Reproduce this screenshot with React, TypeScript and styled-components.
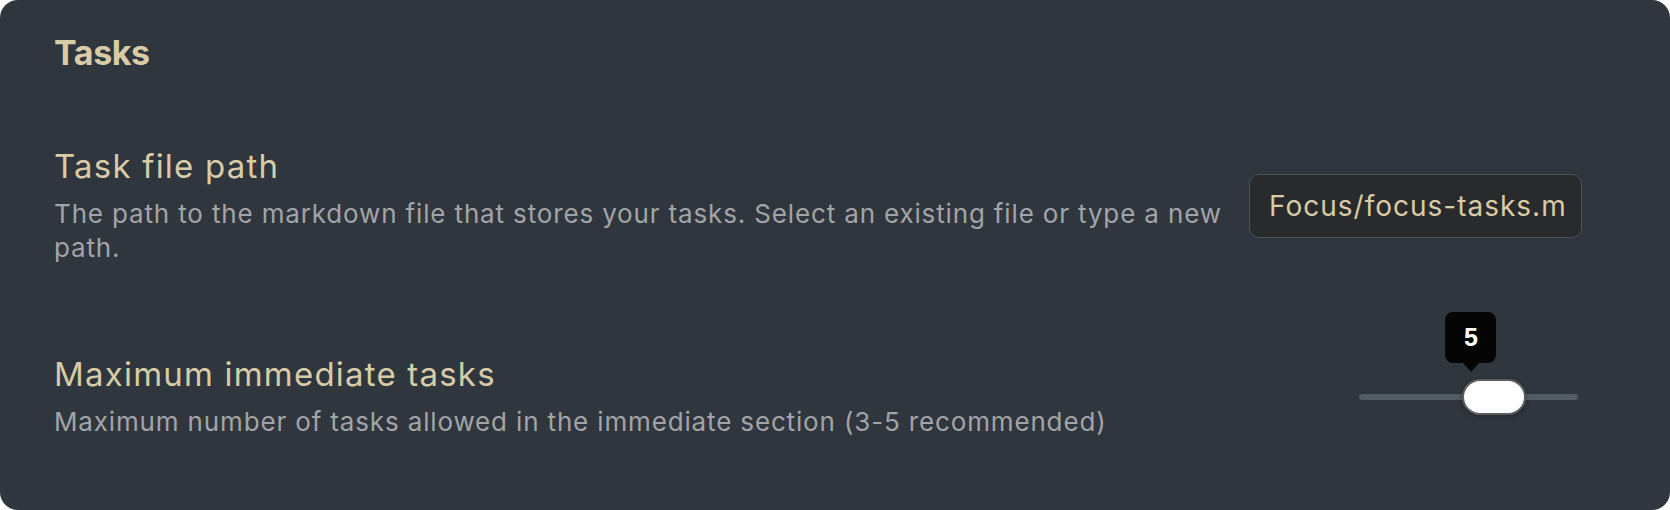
import React from 'react';
import styled, { createGlobalStyle } from 'styled-components';

const GlobalStyle = createGlobalStyle`
  html, body {
    margin: 0;
    padding: 0;
    background: #ffffff;
  }
  * {
    box-sizing: border-box;
  }
`;

const Card = styled.section`
  width: 1670px;
  height: 510px;
  padding: 33px 88px 0 54px;
  background: #2f363e;
  border-radius: 18px;
  font-family: Inter, 'Noto Sans', sans-serif;
  overflow: hidden;
`;

const SectionTitle = styled.h2`
  margin: 0;
  font-size: 34px;
  line-height: 40px;
  font-weight: 700;
  color: #d8cba8;
  letter-spacing: -0.4px;
`;

const ItemList = styled.div`
  margin-top: 73px;
  display: flex;
  flex-direction: column;
  row-gap: 89px;
`;

const SettingItem = styled.div`
  display: flex;
  align-items: center;
  justify-content: space-between;
  column-gap: 8px;
`;

const Info = styled.div`
  flex: 1;
`;

const Name = styled.div`
  font-size: 33px;
  line-height: 40px;
  font-weight: 400;
  color: #d8cba8;
  letter-spacing: 1.2px;
`;

const Description = styled.div`
  margin-top: 11px;
  font-size: 26px;
  line-height: 34px;
  color: #a2a4a7;
  letter-spacing: 0.85px;
`;

const TextInput = styled.input`
  width: 333px;
  height: 64px;
  flex-shrink: 0;
  padding: 0 16px 0 19px;
  background: #292a2b;
  border: 1.5px solid #4b555d;
  border-radius: 10px;
  color: #d8cba8;
  font-family: Inter, 'Noto Sans', sans-serif;
  font-size: 28px;
  letter-spacing: 1px;
  outline: none;
`;

const SliderBox = styled.div`
  position: relative;
  width: 219px;
  height: 36px;
  margin-right: 4px;
  flex-shrink: 0;
  display: flex;
  align-items: center;
`;

const Track = styled.div`
  width: 100%;
  height: 6px;
  border-radius: 3px;
  background: #515c64;
`;

const Thumb = styled.div`
  position: absolute;
  top: 0;
  width: 64px;
  height: 36px;
  border-radius: 18px;
  background: #ffffff;
  border: 2px solid #5b5e61;
  box-shadow: 0 1px 4px rgba(0, 0, 0, 0.35);
`;

const Tooltip = styled.div`
  position: absolute;
  left: -19px;
  bottom: 50px;
  width: 51px;
  height: 51px;
  border-radius: 8px;
  background: #050505;
  color: #ffffff;
  font-family: 'Liberation Sans', Arial, sans-serif;
  font-weight: 700;
  font-size: 25px;
  display: flex;
  align-items: center;
  justify-content: center;

  &::after {
    content: '';
    position: absolute;
    left: 50%;
    bottom: -9px;
    margin-left: -8px;
    border-left: 8px solid transparent;
    border-right: 8px solid transparent;
    border-top: 9px solid #050505;
  }
`;

interface SliderProps {
  min: number;
  max: number;
  value: number;
}

function Slider({ min, max, value }: SliderProps) {
  const travel = 219 - 64;
  const left = ((value - min) / (max - min)) * travel;
  return (
    <SliderBox>
      <Track />
      <Thumb style={{ left }}>
        <Tooltip>{value}</Tooltip>
      </Thumb>
    </SliderBox>
  );
}

export default function App() {
  return (
    <>
      <GlobalStyle />
      <Card>
        <SectionTitle>Tasks</SectionTitle>
        <ItemList>
          <SettingItem>
            <Info>
              <Name>Task file path</Name>
              <Description>
                The path to the markdown file that stores your tasks. Select an
                existing file or type a new path.
              </Description>
            </Info>
            <TextInput type="text" readOnly value="Focus/focus-tasks.md" />
          </SettingItem>
          <SettingItem>
            <Info>
              <Name>Maximum immediate tasks</Name>
              <Description>
                Maximum number of tasks allowed in the immediate section (3-5
                recommended)
              </Description>
            </Info>
            <Slider min={1} max={7} value={5} />
          </SettingItem>
        </ItemList>
      </Card>
    </>
  );
}
